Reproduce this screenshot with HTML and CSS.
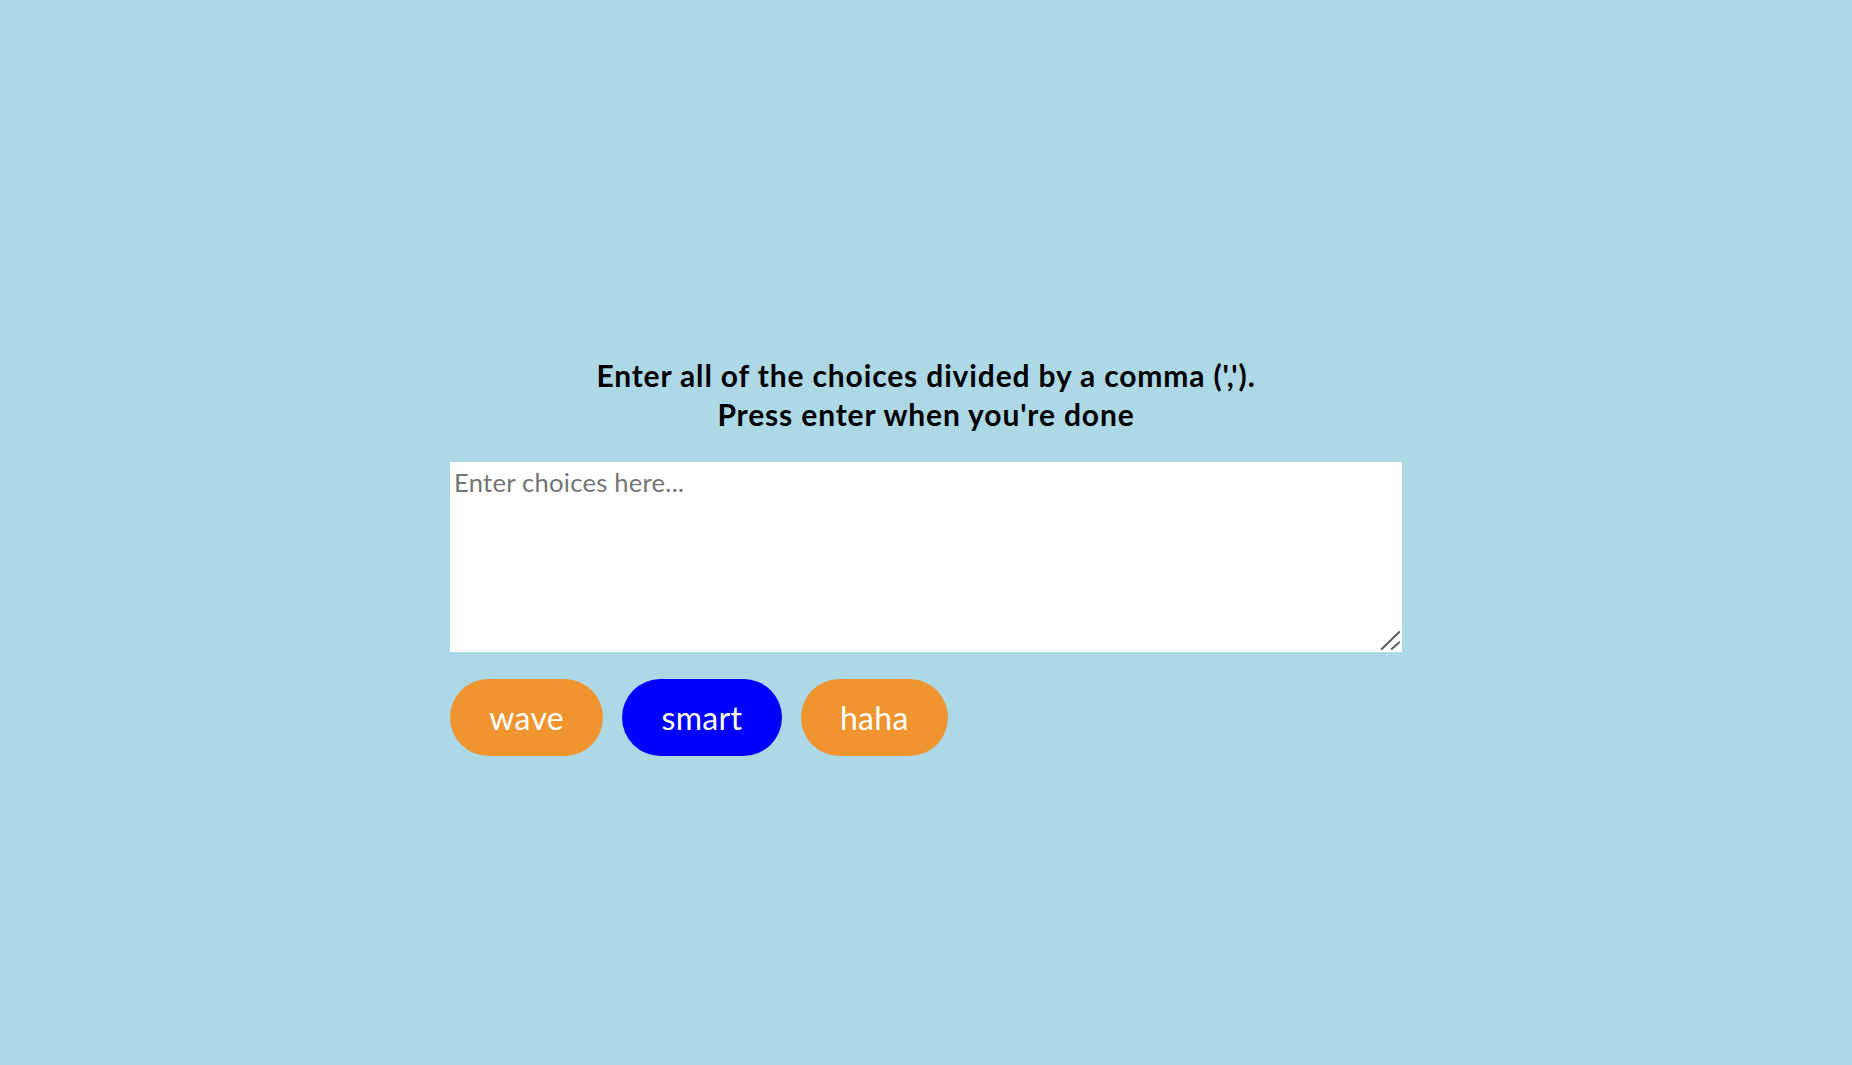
FILE: index.html
```html
<!DOCTYPE html>
<html lang="en">
<head>
<meta charset="utf-8">
<title>Choices</title>
<link rel="stylesheet" href="styles.css">
</head>
<body>
<main class="page">
  <section class="panel">
    <h2 class="prompt">Enter all of the choices divided by a comma (',').<br>Press enter when you're done</h2>
    <div class="field">
      <textarea class="choices" placeholder="Enter choices here..."></textarea>
      <svg class="grip" width="24" height="24" viewBox="0 0 24 24" aria-hidden="true">
        <line x1="3.7" y1="21" x2="21.3" y2="4" />
        <line x1="13.7" y1="21" x2="21.3" y2="14.3" />
      </svg>
    </div>
    <div class="tags">
      <button class="tag tag-orange">wave</button>
      <button class="tag tag-blue">smart</button>
      <button class="tag tag-orange">haha</button>
    </div>
  </section>
</main>
</body>
</html>
```
FILE: styles.css
```css
html, body {
  margin: 0;
  padding: 0;
  height: 100%;
}
body {
  background: #add8e6;
  font-family: Lato, "Noto Sans", sans-serif;
  overflow: hidden;
}
.page {
  display: flex;
  justify-content: center;
  padding-top: 355.5px;
}
.panel {
  width: 952px;
  display: flex;
  flex-direction: column;
}
.prompt {
  margin: 0;
  text-align: center;
  font-size: 30px;
  line-height: 39px;
  font-weight: 700;
  letter-spacing: 0.85px;
  color: #000;
}
.field {
  position: relative;
  margin-top: 28.5px;
  width: 952px;
  height: 190px;
}
.choices {
  display: block;
  box-sizing: border-box;
  width: 100%;
  height: 100%;
  margin: 0;
  border: none;
  outline: none;
  resize: none;
  padding: 4px 4px;
  background: #fff;
  font-family: Lato, "Noto Sans", sans-serif;
  font-size: 25.6px;
  line-height: 32px;
  letter-spacing: 0.25px;
  color: #000;
}
.choices::placeholder {
  color: #757575;
}
.grip {
  position: absolute;
  right: 0;
  bottom: 0;
  pointer-events: none;
}
.grip line {
  stroke: #5f5f5f;
  stroke-width: 2;
  stroke-linecap: round;
}
.tags {
  display: flex;
  gap: 19px;
  margin-top: 27px;
}
.tag {
  border: none;
  border-radius: 40px;
  padding: 18.5px 39.3px;
  font-family: Lato, "Noto Sans", sans-serif;
  font-size: 32px;
  line-height: 40px;
  letter-spacing: 0.3px;
  color: #fff;
  cursor: pointer;
}
.tag-orange {
  background: #f0942f;
}
.tag-blue {
  background: #0000ff;
}
```
